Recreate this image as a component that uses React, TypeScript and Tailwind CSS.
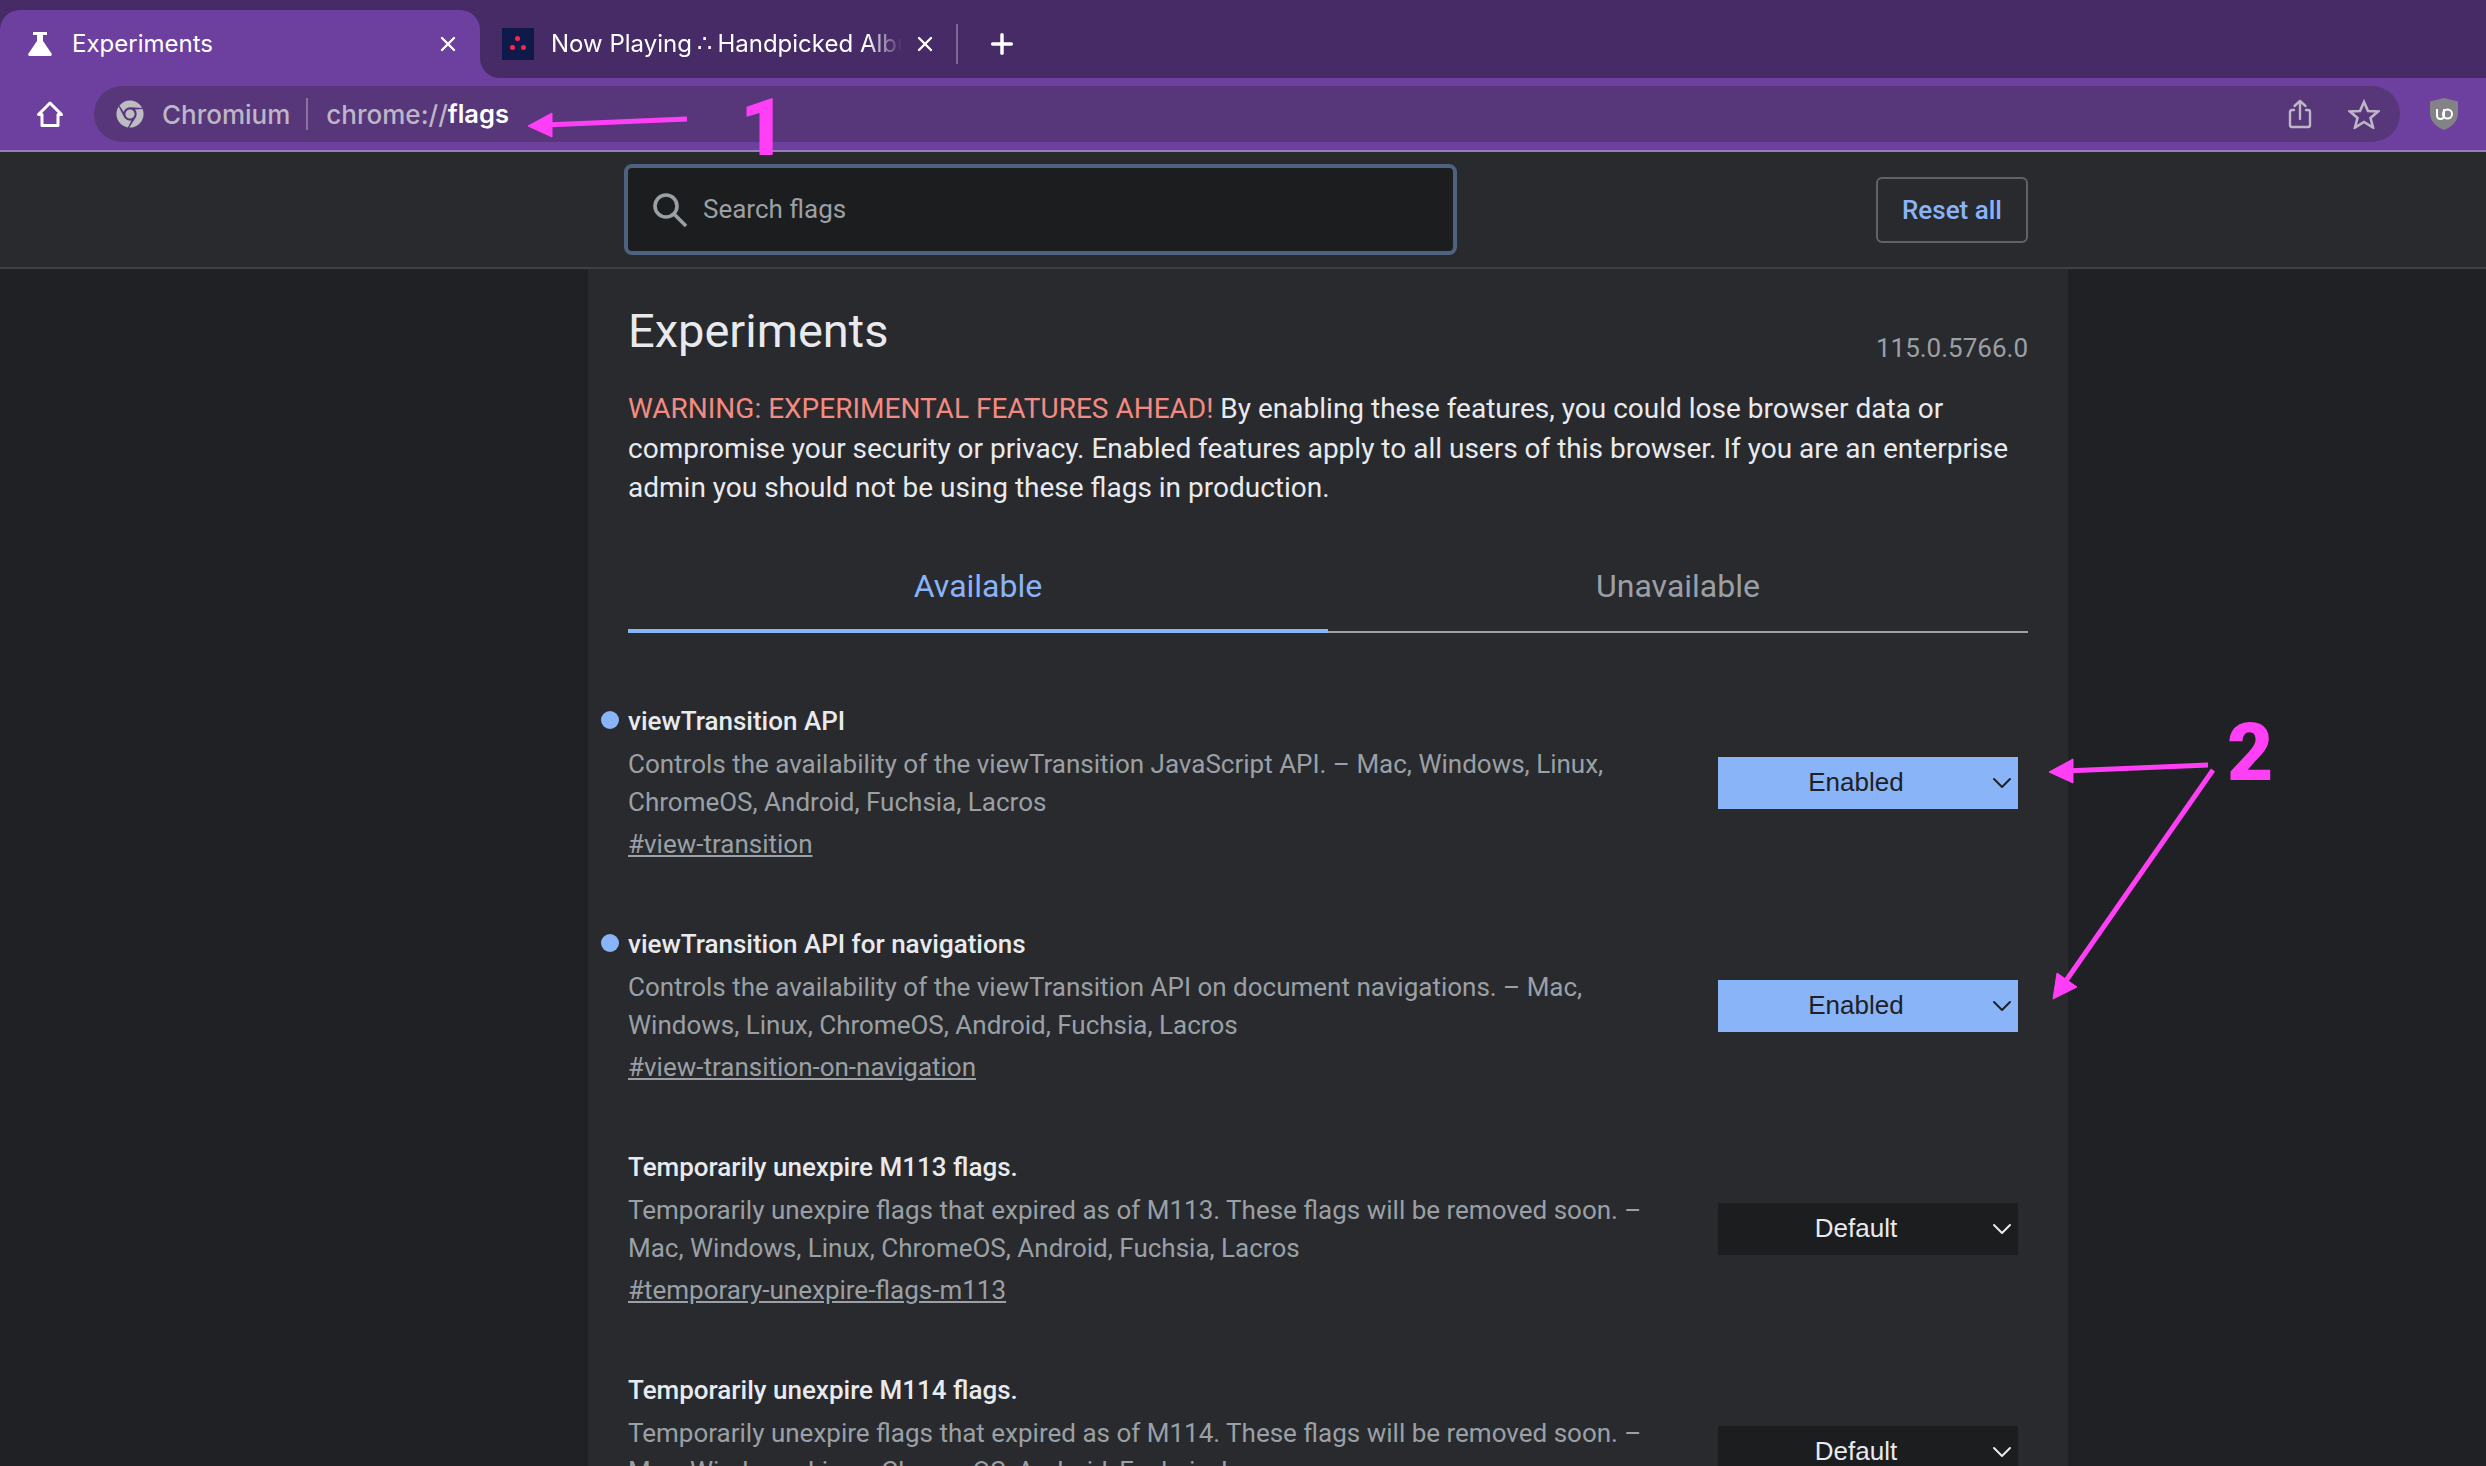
import { X, Plus, ChevronDown } from "lucide-react"
import { FaChrome } from "react-icons/fa"

const flags = [
  {
    title: "viewTransition API",
    desc: "Controls the availability of the viewTransition JavaScript API. – Mac, Windows, Linux, ChromeOS, Android, Fuchsia, Lacros",
    link: "#view-transition",
    value: "Enabled",
  },
  {
    title: "viewTransition API for navigations",
    desc: "Controls the availability of the viewTransition API on document navigations. – Mac, Windows, Linux, ChromeOS, Android, Fuchsia, Lacros",
    link: "#view-transition-on-navigation",
    value: "Enabled",
  },
  {
    title: "Temporarily unexpire M113 flags.",
    desc: "Temporarily unexpire flags that expired as of M113. These flags will be removed soon. – Mac, Windows, Linux, ChromeOS, Android, Fuchsia, Lacros",
    link: "#temporary-unexpire-flags-m113",
    value: "Default",
  },
  {
    title: "Temporarily unexpire M114 flags.",
    desc: "Temporarily unexpire flags that expired as of M114. These flags will be removed soon. – Mac, Windows, Linux, ChromeOS, Android, Fuchsia, Lacros",
    link: "#temporary-unexpire-flags-m114",
    value: "Default",
  },
]

function TabStrip() {
  return (
    <div className="flex h-[78px] bg-[#462b66] font-['Inter',sans-serif] text-[24px] text-white">
      <div className="mt-[10px] flex h-[68px] w-[480px] items-center rounded-t-[20px] bg-[#6d40a0] pl-[28px]">
        <svg width="24" height="24" viewBox="0 0 24 24" fill="white">
          <path d="M5 0h14v3h-4v6l8.500 12.500q1 2.500-1.500 2.500h-20q-2.500 0-1.500-2.500l8.500-12.500v-6h-4z" />
        </svg>
        <span className="ml-[20px]">Experiments</span>
        <X size={24} strokeWidth={2.4} className="ml-auto mr-[20px]" />
      </div>
      <div className="flex-1 bg-[#6d40a0]">
        <div className="flex h-full items-center rounded-bl-[20px] bg-[#462b66] pl-[22px] pt-[10px]">
          <div className="relative h-[32px] w-[32px] shrink-0 bg-[#0f1a4a]">
            <span className="absolute left-[13px] top-[8px] h-[5px] w-[5px] rounded-full bg-[#f5294f]" />
            <span className="absolute left-[8px] top-[17px] h-[5px] w-[5px] rounded-full bg-[#f5294f]" />
            <span className="absolute left-[19px] top-[17px] h-[5px] w-[5px] rounded-full bg-[#f5294f]" />
          </div>
          <span className="ml-[17px] w-[351px] overflow-hidden whitespace-nowrap [mask-image:linear-gradient(to_right,black_90%,transparent)]">
            Now Playing <span className="mx-[-1.500px]">∴</span> Handpicked Albums
          </span>
          <X size={24} strokeWidth={2.4} className="ml-[11px]" />
          <div className="ml-[19px] h-[40px] w-[2px] bg-[#7d6a94]" />
          <Plus size={32} strokeWidth={2.6} className="ml-[28px]" />
        </div>
      </div>
    </div>
  )
}

function Toolbar() {
  return (
    <div className="flex h-[74px] items-center border-b-2 border-[#9a7bbb] bg-[#6d40a0] pl-[36px] font-['Inter',sans-serif]">
      <svg width="28" height="28" viewBox="0 0 28 28" fill="none" stroke="white" strokeWidth="3" strokeLinejoin="round">
        <path d="M14 3 2.500 14.500H6V25.500H22V14.500H25.500Z" />
      </svg>
      <div className="ml-[30px] flex h-[56px] w-[2306px] items-center rounded-full bg-[#57367a] pl-[22px] text-[26px] font-medium text-[#bdb6c6]">
        <FaChrome size={28} className="text-[#bcbcc2]" />
        <span className="ml-[18px]">Chromium</span>
        <div className="ml-[16px] h-[32px] w-[2px] bg-[#8a749f]" />
        <span className="ml-[18px]">chrome://</span>
        <span className="text-[25.500px] font-semibold text-white">flags</span>
        <svg width="24" height="30" viewBox="0 0 24 30" fill="none" stroke="#bdb6c6" strokeWidth="2.400" strokeLinecap="round" strokeLinejoin="round" className="ml-auto mr-[36px]">
          <path d="M6 11H4q-2 0-2 2v13q0 2 2 2h16q2 0 2-2V13q0-2-2-2h-2M12 20V2M6.500 7 12 2l5.500 5" />
        </svg>
        <svg width="32" height="30" viewBox="0 0 32 30" fill="none" stroke="#bdb6c6" strokeWidth="2.600" strokeLinejoin="miter" className="mr-[20px]">
          <path d="M16 3 20 12 30 12.500 22.500 19 25 28.500 16 23 7 28.500 9.500 19 2 12.500 12 12Z" />
        </svg>
      </div>
      <svg width="28" height="32" viewBox="0 0 28 32" className="ml-[30px]">
        <path d="M14 0 28 3.500V15q0 11-14 17Q0 26 0 15V3.500Z" fill="#838387" />
        <path d="M7 11v6q0 4 3.500 4t3.500-4v-6" fill="none" stroke="white" strokeWidth="2" />
        <circle cx="17.500" cy="16" r="4.500" fill="none" stroke="white" strokeWidth="2" />
      </svg>
    </div>
  )
}

function SearchHeader() {
  return (
    <div className="flex h-[117px] items-start border-b-2 border-[#3f4043] bg-[#292a2d] font-['Roboto',sans-serif]">
      <div className="ml-[624px] mt-[12px] flex h-[91px] w-[833px] items-center rounded-[8px] border-4 border-[#4e6280] bg-[#1c1d1f] pl-[24px] text-[26px] text-[#9aa0a6]">
        <svg width="36" height="36" viewBox="0 0 36 36" fill="none" stroke="#9aa0a6" strokeWidth="3.600">
          <circle cx="14" cy="14" r="11" />
          <path d="M22 22 34 34" />
        </svg>
        <span className="ml-[15px]">Search flags</span>
      </div>
      <div className="ml-[419px] mt-[25px] flex h-[66px] w-[152px] items-center justify-center rounded-[6px] border-2 border-[#5f6368] text-[26px] font-medium text-[#8ab4f8]">
        Reset all
      </div>
    </div>
  )
}

function FlagRow({ flag, active }: { flag: (typeof flags)[number]; active: boolean }) {
  return (
    <div className="relative flex h-[223px] shrink-0 justify-between">
      {active && <span className="absolute left-[-27px] top-[8px] h-[18px] w-[18px] rounded-full bg-[#8ab4f8]" />}
      <div className="w-[1030px] text-[26px] leading-[37.500px]">
        <h3 className="font-medium text-[#e8eaed]">{flag.title}</h3>
        <p className="mt-[6px] text-[#9aa0a6]">{flag.desc}</p>
        <a className="mt-[5px] block text-[#9aa0a6] underline">{flag.link}</a>
      </div>
      <div
        className={
          active
            ? "mr-[10px] mt-[54px] flex h-[52px] w-[300px] items-center bg-[#8ab4f8] font-['Liberation_Sans',sans-serif] text-[26px] text-[#202124]"
            : "mr-[10px] mt-[54px] flex h-[52px] w-[300px] items-center bg-[#1c1d1f] font-['Liberation_Sans',sans-serif] text-[26px] text-[#e8eaed]"
        }
      >
        <span className="flex-1 pl-[8px] text-center">{flag.value}</span>
        <ChevronDown size={32} strokeWidth={1.5} />
      </div>
    </div>
  )
}

function Annotations() {
  return (
    <div className="pointer-events-none absolute left-0 top-0 h-[1466px] w-[2486px] font-['Roboto',sans-serif] font-black text-[#ff3ff5]">
      <svg width="2486" height="1466" className="absolute left-0 top-0">
        <g fill="#ff3ff5" stroke="#ff3ff5" strokeWidth="5">
          <path d="M687 119 545 125" />
          <path d="M528 126 552 113 552 137Z" strokeWidth="1" />
          <path d="M2208 765 2065 771" />
          <path d="M2049 772 2073 759 2073 783Z" strokeWidth="1" />
          <path d="M2213 770 2063 985" />
          <path d="M2053 999 2057 973 2077 987Z" strokeWidth="1" />
        </g>
      </svg>
      <span className="absolute left-[740px] top-[82px] text-[80px] leading-[92px]">1</span>
      <span className="absolute left-[2227px] top-[707px] text-[80px] leading-[92px]">2</span>
    </div>
  )
}

export default function App() {
  return (
    <div className="relative h-[1466px] w-[2486px] overflow-hidden bg-[#202124]">
      <TabStrip />
      <Toolbar />
      <SearchHeader />
      <main className="ml-[588px] h-[1197px] w-[1480px] bg-[#292a2d] px-[40px] font-['Roboto',sans-serif]">
        <div className="flex items-start justify-between pt-[34px]">
          <h1 className="text-[47px] leading-[56px] text-[#e8eaed]">Experiments</h1>
          <span className="mt-[28px] text-[26px] leading-[34px] text-[#9aa0a6]">115.0.5766.0</span>
        </div>
        <p className="mt-[24px] text-[28px] leading-[39.500px] text-[#e8eaed]">
          <span className="text-[#f28b82]">WARNING: EXPERIMENTAL FEATURES AHEAD!</span> By enabling these features, you
          could lose browser data or compromise your security or privacy. Enabled features apply to all users of this
          browser. If you are an enterprise admin you should not be using these flags in production.
        </p>
        <div className="mt-[53px] flex text-[32px]">
          <div className="h-[72px] w-[700px] border-b-4 border-[#8ab4f8] text-center leading-[50px] text-[#8ab4f8]">
            Available
          </div>
          <div className="h-[72px] w-[700px] border-b-2 border-[#9aa0a6] text-center leading-[50px] text-[#9aa0a6]">
            Unavailable
          </div>
        </div>
        <div className="mt-[70px] flex flex-col">
          {flags.map((flag) => (
            <FlagRow key={flag.link} flag={flag} active={flag.value === "Enabled"} />
          ))}
        </div>
      </main>
      <Annotations />
    </div>
  )
}
